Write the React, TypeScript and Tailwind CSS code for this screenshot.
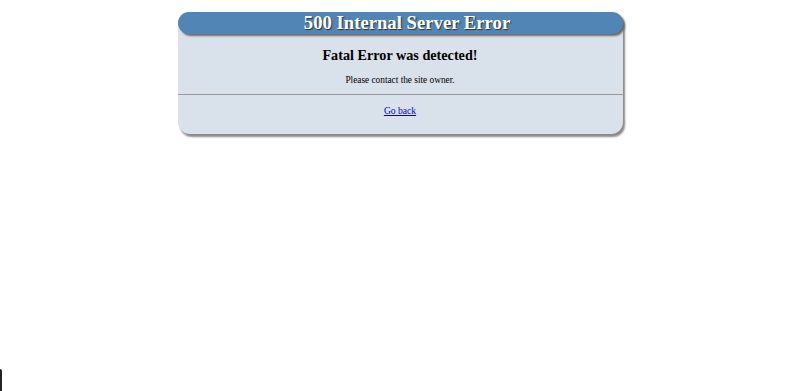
import React from "react";

export default function App() {
  return (
    <div className="w-[800px] h-[391px] bg-white relative overflow-hidden" style={{ fontFamily: '"Liberation Serif", "Times New Roman", serif' }}>
      <div className="pt-[12px] flex justify-center">
        <div className="w-[445px] bg-[#d9e1ea] rounded-[12px] shadow-[2px_3px_2px_#8a8a8a] pb-[19px]">
          <div className="h-[22px] bg-[#5185b5] rounded-[12px] shadow-[2px_2px_2px_#6b6b6b] flex items-center justify-center pl-[14px]">
            <h1 className="text-white font-bold text-[18.7px] leading-none [text-shadow:1px_1px_1px_#333]">500 Internal Server Error</h1>
          </div>
          <h2 className="text-center font-bold text-[14.2px] leading-none mt-[14px] text-black">Fatal Error was detected!</h2>
          <p className="text-center text-[9.3px] leading-none mt-[14px] text-black">Please contact the site owner.</p>
          <div className="mt-[8px] border-t border-[#9a9a9a]"></div>
          <p className="text-center text-[9.6px] leading-none mt-[11px]">
            <a href="#" className="text-[#0000ee] underline">Go back</a>
          </p>
        </div>
      </div>
      <div className="absolute left-0 bottom-0 w-[2px] h-[22px] bg-[#222] rounded-tr-[2px]"></div>
    </div>
  );
}
